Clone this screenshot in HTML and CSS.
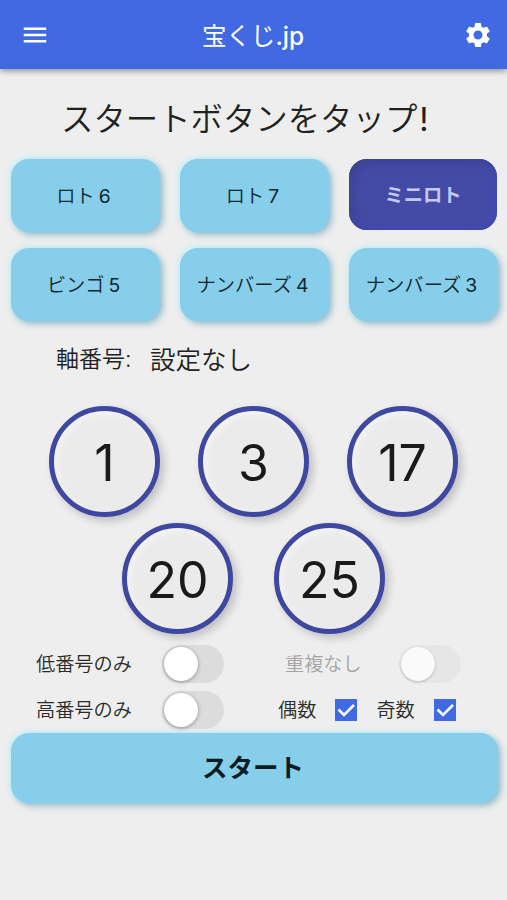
FILE: index.html
```html
<!DOCTYPE html>
<html lang="ja">

<head>
	<meta charset="UTF-8" />
	<meta name="viewport" content="width=device-width,initial-scale=1" />
	<title>宝くじ.jp</title>
	<link rel="stylesheet" href="styles.css">
</head>

<body>
	<header class="header">
		<svg class="icon menu" viewBox="0 0 24 24"><path d="M3 18h18v-2H3v2zm0-5h18v-2H3v2zm0-7v2h18V6H3z" /></svg>
		<h1 class="title">宝くじ<span class="domain">.jp</span></h1>
		<svg class="icon gear" viewBox="0 0 24 24"><path d="M19.14 12.94c.04-.3.06-.61.06-.94 0-.32-.02-.64-.07-.94l2.03-1.58c.18-.14.23-.41.12-.61l-1.92-3.32c-.12-.22-.37-.29-.59-.22l-2.39.96c-.5-.38-1.03-.7-1.62-.94l-.36-2.54c-.04-.24-.24-.41-.48-.41h-3.84c-.24 0-.43.17-.47.41l-.36 2.54c-.59.24-1.13.57-1.62.94l-2.39-.96c-.22-.08-.47 0-.59.22L2.74 8.87c-.12.21-.08.47.12.61l2.03 1.58c-.05.3-.09.63-.09.94s.02.64.07.94l-2.03 1.58c-.18.14-.23.41-.12.61l1.92 3.32c.12.22.37.29.59.22l2.39-.96c.5.38 1.03.7 1.62.94l.36 2.54c.05.24.24.41.48.41h3.84c.24 0 .44-.17.47-.41l.36-2.54c.59-.24 1.13-.56 1.62-.94l2.39.96c.22.08.47 0 .59-.22l1.92-3.32c.12-.22.07-.47-.12-.61l-2.01-1.58zM12 15.6c-1.98 0-3.6-1.62-3.6-3.6s1.62-3.6 3.6-3.6 3.6 1.62 3.6 3.6-1.62 3.6-3.6 3.6z" /></svg>
	</header>

	<main class="main">
		<p class="message">スタートボタンをタップ<span class="mark">!</span></p>

		<div class="games">
			<button class="game">ロト<span class="num">6</span></button>
			<button class="game">ロト<span class="num">7</span></button>
			<button class="game active">ミニロト</button>
			<button class="game">ビンゴ<span class="num">5</span></button>
			<button class="game">ナンバーズ<span class="num">4</span></button>
			<button class="game">ナンバーズ<span class="num">3</span></button>
		</div>

		<p class="axis"><span class="axis-label">軸番号:</span><span class="axis-value">設定なし</span></p>

		<div class="balls">
			<div class="ball">1</div>
			<div class="ball">3</div>
			<div class="ball">17</div>
		</div>
		<div class="balls second">
			<div class="ball">20</div>
			<div class="ball">25</div>
		</div>

		<div class="options">
			<div class="option">
				<span class="label">低番号のみ</span>
				<span class="switch"></span>
			</div>
			<div class="option disabled">
				<span class="label">重複なし</span>
				<span class="switch"></span>
			</div>
			<div class="option">
				<span class="label">高番号のみ</span>
				<span class="switch"></span>
			</div>
			<div class="option checks">
				<span class="label">偶数</span>
				<svg class="check" viewBox="0 0 22 22"><path d="M3.5 10.5l5.5 5.5 10-10" /></svg>
				<span class="label">奇数</span>
				<svg class="check" viewBox="0 0 22 22"><path d="M3.5 10.5l5.5 5.5 10-10" /></svg>
			</div>
		</div>

		<button class="start">スタート</button>
	</main>
</body>

</html>
```
FILE: styles.css
```css
* {
	box-sizing: border-box;
	margin: 0;
	padding: 0;
}

body {
	min-height: 900px;
	background: #eee;
	color: #212121;
	font-family: Inter, 'Noto Sans CJK JP', sans-serif;
}

.header {
	display: flex;
	align-items: center;
	justify-content: space-between;
	height: 69px;
	padding: 0 14px 0 20px;
	background: #4169e1;
	color: #fff;
	box-shadow: 0 2px 6px rgba(0, 0, 0, .4);
}

.icon {
	width: 30px;
	height: 30px;
	fill: #fff;
}

.title {
	padding: 0 7px 1px 0;
	font-size: 24.5px;
	font-weight: 400;
}

.domain {
	font-weight: 500;
}

.main {
	padding: 0 9px 0 10px;
}

.message {
	height: 90px;
	padding: 26px 0 0 51px;
	font-size: 32.4px;
	line-height: 50px;
	font-weight: 350;
	white-space: nowrap;
}

.mark {
	margin-left: 2px;
	font-weight: 400;
}

.games {
	display: grid;
	grid-template-columns: repeat(3, 149px);
	gap: 16px 20px;
	padding-left: 1px;
}

.game,
.start {
	border: none;
	border-radius: 18px;
	background: #87ceeb;
	box-shadow: 3px 3px 6px rgba(60, 140, 170, .5), -2px -2px 5px rgba(190, 245, 255, .7);
	color: #12262e;
	font-family: inherit;
	cursor: pointer;
}

.game {
	height: 73px;
	padding: 0 4px 2px 0;
	font-size: 19.3px;
	font-weight: 350;
	white-space: nowrap;
}

.num {
	margin-left: 4px;
	font-weight: 400;
}

.game.active {
	width: 148px;
	height: 71px;
	padding: 0 0 1px;
	background: #444ba6;
	box-shadow: inset 3px 3px 12px #3b4090, inset -3px -3px 10px #474cb8;
	color: #c5caf5;
	font-weight: 600;
}

.axis {
	display: flex;
	align-items: center;
	height: 38px;
	margin-top: 17px;
	padding-left: 46px;
	font-weight: 350;
}

.axis-label {
	width: 94px;
	font-size: 23px;
}

.axis-value {
	font-size: 25.5px;
}

.balls {
	display: flex;
	justify-content: center;
	gap: 38px;
	margin-top: 30px;
	padding-right: 1px;
}

.balls.second {
	gap: 41px;
	margin-top: 6px;
}

.ball {
	display: flex;
	align-items: center;
	justify-content: center;
	width: 111px;
	height: 111px;
	padding-top: 2px;
	border: 5px solid #3f48a0;
	border-radius: 50%;
	background: #ebebeb;
	box-shadow: 4px 4px 8px rgba(0, 0, 0, .2), inset 3px 3px 6px #f4f4f4;
	color: #1a1a1a;
	font-size: 50px;
}

.options {
	display: grid;
	grid-template-columns: 214px 176px;
	justify-content: space-between;
	row-gap: 8px;
	margin-top: 11px;
	padding-right: 37px;
}

.option {
	display: flex;
	align-items: center;
	justify-content: space-between;
	height: 38px;
	padding-left: 26px;
}

.option.disabled {
	padding-left: 0;
}

.option.checks {
	justify-content: flex-start;
	gap: 19px;
	margin-left: -7px;
	padding-left: 0;
}

.label {
	font-size: 19.2px;
	line-height: 28px;
	font-weight: 350;
	color: #2a2a2a;
}

.disabled .label {
	color: #a4a4a4;
}

.switch {
	width: 62px;
	height: 38px;
	padding: 2px;
	border-radius: 19px;
	background: #dcdcdc;
}

.switch::before {
	content: '';
	display: block;
	width: 34px;
	height: 34px;
	border-radius: 50%;
	background: #fff;
	box-shadow: 0 1px 4px rgba(0, 0, 0, .35);
}

.disabled .switch {
	background: #e6e6e6;
}

.disabled .switch::before {
	background: #fafafa;
	box-shadow: 0 1px 3px rgba(0, 0, 0, .2);
}

.check {
	width: 22px;
	height: 22px;
	background: #4169e1;
	fill: none;
	stroke: #fff;
	stroke-width: 2.6;
}

.start {
	display: block;
	width: 487px;
	height: 70px;
	margin: 4px 0 0 1px;
	padding: 0 3px 5px 0;
	color: #0c1c22;
	font-size: 25.5px;
	font-weight: 600;
}
```
